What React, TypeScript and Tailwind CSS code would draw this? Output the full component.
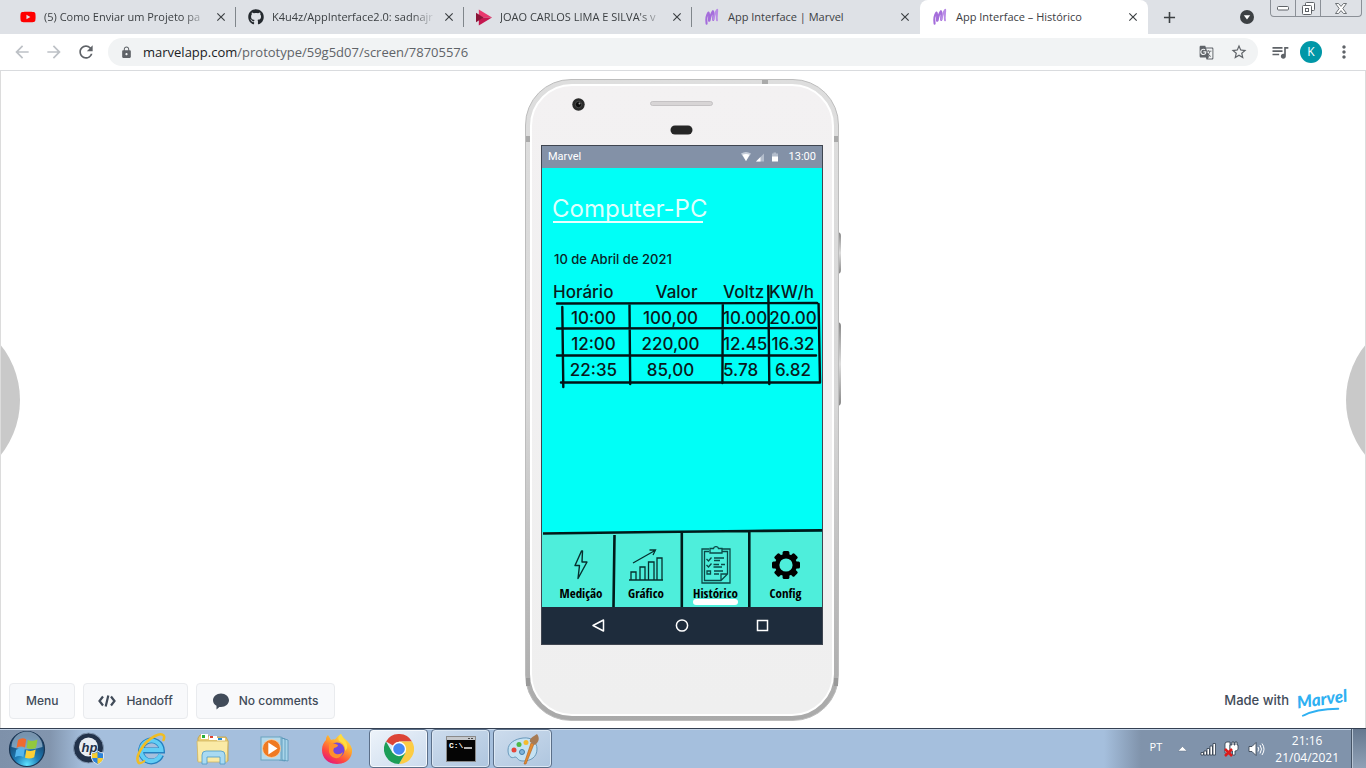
import type { ReactNode } from "react";
import { FaGithub, FaYoutube } from "react-icons/fa";
import {
  MdArrowBack,
  MdArrowForward,
  MdClose,
  MdGTranslate,
  MdLock,
  MdMoreVert,
  MdQueueMusic,
  MdRefresh,
  MdStarBorder,
  MdAdd,
} from "react-icons/md";

function MarvelMark() {
  return (
    <svg width="16" height="18" viewBox="0 0 16 18" fill="none" stroke="#a56ddb" strokeLinecap="round" strokeLinejoin="round" aria-hidden="true">
      <path d="M2.6 15.6C2 12 2.4 7.4 4.4 4.6C5.6 5 5 9.4 5 12.8" strokeWidth="2.1" />
      <path d="M5.6 12.4C6.2 9 7.2 5.4 9 3.2C10 4 9 9 9.2 12" strokeWidth="2.1" />
      <path d="M9.6 11.2C10.2 8 11.4 4 13.2 1.8C13.4 5 12.2 9 13 12.4" strokeWidth="1.9" stroke="#b98be6" />
    </svg>
  );
}

function PlayMark() {
  return (
    <svg width="17" height="17" viewBox="0 0 17 17" aria-hidden="true">
      <path d="M3 0L17 8.5H7L3 6Z" fill="#e8386d" />
      <path d="M17 8.5L3 17V11L7 8.5Z" fill="#c4174f" />
      <path d="M0 3.5L8 8.5L0 13.5Z" fill="#8a1538" />
    </svg>
  );
}

const tabs: { title: string; icon: ReactNode; active?: boolean; fade?: boolean }[] = [
  { title: "(5) Como Enviar um Projeto pa", icon: <FaYoutube size={16} color="#ff0000" />, fade: true },
  { title: "K4u4z/AppInterface2.0: sadnajr", icon: <FaGithub size={16} color="#24292e" />, fade: true },
  { title: "JOAO CARLOS LIMA E SILVA's v", icon: <PlayMark />, fade: true },
  { title: "App Interface | Marvel", icon: <MarvelMark /> },
  { title: "App Interface – Histórico", icon: <MarvelMark />, active: true },
];

function TabStrip() {
  return (
    <header className="flex h-[34px] bg-[#dee1e6] pl-2 text-[#3c4043]">
      {tabs.map((t, i) => (
        <div
          key={t.title}
          className={
            t.active
              ? "flex w-[228px] min-w-0 items-center rounded-t-lg bg-white pr-2 pl-3"
              : "flex w-[228px] min-w-0 items-center pl-3"
          }
        >
          <span className="flex w-4 shrink-0 justify-center">{t.icon}</span>
          <a
            href="#tab"
            className={
              t.fade
                ? "ml-2 w-[164px] text-[11px] leading-4 whitespace-nowrap [mask-image:linear-gradient(to_right,#000_85%,transparent)]"
                : "ml-2 w-[164px] text-[11px] leading-4 whitespace-nowrap"
            }
          >
            {t.title}
          </a>
          <button aria-label="Fechar guia" className="ml-1.5 flex shrink-0">
            <MdClose size={14} />
          </button>
          {i < 3 && <span className="ml-auto h-5 w-px shrink-0 bg-[#80868b]" />}
        </div>
      ))}
      <button aria-label="Nova guia" className="ml-3 flex items-center">
        <MdAdd size={19} />
      </button>
      <div className="ml-auto flex items-start">
        <button aria-label="Pesquisar guias" className="mt-2.5 mr-4 block">
          <svg width="14" height="14" viewBox="0 0 14 14">
            <circle cx="7" cy="7" r="7" fill="#3c4043" />
            <path d="M3.8 5.2H10.2L7 9.4Z" fill="#fff" />
          </svg>
        </button>
        <div className="mr-1 flex h-[17px] rounded-b border border-t-0 border-[#8b9097] text-[#5f6368]">
          <button aria-label="Minimizar" className="flex w-[25px] items-center justify-center border-r border-[#8b9097]">
            <svg width="13" height="6" viewBox="0 0 13 6">
              <rect x="0.5" y="1.5" width="11" height="3.5" rx="1" fill="#fff" stroke="currentColor" />
            </svg>
          </button>
          <button aria-label="Restaurar" className="flex w-[25px] items-center justify-center border-r border-[#8b9097]">
            <svg width="13" height="13" viewBox="0 0 13 13" fill="#fff" stroke="currentColor">
              <rect x="3.5" y="0.5" width="9" height="8" rx="1" />
              <rect x="0.5" y="3.5" width="9" height="9" rx="1" />
              <rect x="3.5" y="6.5" width="3" height="3" />
            </svg>
          </button>
          <button aria-label="Fechar" className="flex w-10 items-center justify-center">
            <svg width="12" height="11" viewBox="0 0 12 11">
              <path d="M0.5 0.5H3.5L6 3.4L8.5 0.5H11.5L7.8 5.5L11.5 10.5H8.5L6 7.6L3.5 10.5H0.5L4.2 5.5Z" fill="#fff" stroke="currentColor" strokeWidth="0.9" />
            </svg>
          </button>
        </div>
      </div>
    </header>
  );
}

function Toolbar() {
  return (
    <div className="flex h-[37px] items-center border-b border-[#d9dbde] bg-white pl-3 text-[#5f6368]">
      <button aria-label="Voltar" className="text-[#bdc1c6]">
        <MdArrowBack size={20} />
      </button>
      <button aria-label="Avançar" className="ml-3 text-[#bdc1c6]">
        <MdArrowForward size={20} />
      </button>
      <button aria-label="Atualizar" className="ml-3">
        <MdRefresh size={20} />
      </button>
      <div className="ml-3 flex h-7 flex-1 items-center rounded-full bg-[#f1f3f4] pr-2.5 pl-3">
        <MdLock size={13} />
        <a href="#url" className="ml-2.5 flex-1 text-[13px] leading-5">
          <span className="text-[#202124]">marvelapp.com</span>/prototype/59g5d07/screen/78705576
        </a>
        <button aria-label="Traduzir">
          <MdGTranslate size={15} />
        </button>
        <button aria-label="Favorito" className="ml-4">
          <MdStarBorder size={18} />
        </button>
      </div>
      <button aria-label="Mídia" className="ml-3">
        <MdQueueMusic size={20} />
      </button>
      <button className="ml-2.5 size-[22px] rounded-full bg-[#0097a7] text-xs leading-[22px] text-white">K</button>
      <button aria-label="Menu do navegador" className="mr-3 ml-3">
        <MdMoreVert size={20} />
      </button>
    </div>
  );
}

const readings = [
  ["10:00", "100,00", "10.00", "20.00"],
  ["12:00", "220,00", "12.45", "16.32"],
  ["22:35", "85,00", "5.78", "6.82"],
];

function HistoryTable() {
  return (
    <div className="relative mt-[11px]">
      <table className="ml-[11px] w-[268px] table-fixed border-collapse text-[17px] leading-6 font-medium whitespace-nowrap text-[#0a1a1c]">
        <colgroup>
          <col className="w-[77px]" />
          <col className="w-[93px]" />
          <col className="w-[46px]" />
          <col />
        </colgroup>
        <thead>
          <tr className="h-[26px] text-left align-top">
            <th className="p-0 font-medium">Horário</th>
            <th className="p-0 text-center font-medium">Valor</th>
            <th className="p-0 font-medium">Voltz</th>
            <th className="p-0 font-medium">KW/h</th>
          </tr>
        </thead>
        <tbody>
          {readings.map((r) => (
            <tr key={r[0]} className="h-[26px] align-top">
              <td className="p-0 pl-1 text-center">{r[0]}</td>
              <td className="p-0 pr-3 text-center">{r[1]}</td>
              <td className="p-0">{r[2]}</td>
              <td className="p-0 pr-1 text-center">{r[3]}</td>
            </tr>
          ))}
        </tbody>
      </table>
      <svg className="absolute top-0 left-0 h-[110px] w-full" stroke="#001417" strokeWidth="2.4" strokeLinecap="round" aria-hidden="true">
        <path d="M15 23.5L275 23M15 48.5L274 48M15 75.5L274 75.5M19 102.5H278M20.3 27L21.3 107M87.5 25L88.2 104M180.8 24L180.4 103M226.3 6L227.3 104M276.6 24L278 102" />
      </svg>
    </div>
  );
}

function BoltIcon() {
  return (
    <svg width="16" height="30" viewBox="0 0 16 30" fill="none" stroke="#06302f" strokeWidth="1.4" strokeLinejoin="round">
      <path d="M8.5 1L2 15.5H6.5L5 28.5L14 12H9L9.5 1Z" />
    </svg>
  );
}

function ChartIcon() {
  return (
    <svg width="36" height="34" viewBox="0 0 36 34" fill="none" stroke="#06302f" strokeWidth="1.3">
      <path d="M1 32H35M3 32V24H8V32M12 32V19H17V32M20.5 32V14H26V32M29 32V10H34V32M5 15L27 2.5M21.5 2L27.5 2L25 7" />
    </svg>
  );
}

function ClipboardIcon() {
  return (
    <svg width="32" height="38" viewBox="0 0 32 38" fill="none" stroke="#0b4a48" strokeWidth="1.3">
      <path d="M9 3H2V37H30V3H22M9 5.5H4.5V34.5H21L27.5 28V5.5H22M21 34.5V28H27.5" />
      <path d="M10 7V2.5H13.5C14 0 18 0 18.5 2.5H22V7Z" />
      <path d="M6.5 13L8.5 15L11.5 11.5M6.5 19L8.5 21L11.5 17.5M7 25H10.5V28H7ZM14 12H24M14 14.5H20M13.5 18.5H19M21 18.5H25M13.5 21H22M14 25H23M14 28H19" />
    </svg>
  );
}

function GearIcon() {
  return (
    <svg width="30" height="30" viewBox="0 0 30 30">
      <g fill="#000">
        {[0, 45, 90, 135].map((a) => (
          <rect key={a} x="11.6" y="1" width="6.8" height="28" rx="1.5" transform={`rotate(${a} 15 15)`} />
        ))}
        <circle cx="15" cy="15" r="11" />
      </g>
      <circle cx="15" cy="15" r="6.6" fill="#4eeedb" />
    </svg>
  );
}

const sections = [
  { label: "Medição", icon: <BoltIcon />, className: "pl-1.5" },
  { label: "Gráfico", icon: <ChartIcon />, className: "pr-1" },
  { label: "Histórico", icon: <ClipboardIcon />, className: "" },
  { label: "Config", icon: <GearIcon />, className: "" },
];

function SectionNav() {
  return (
    <nav className="relative grid h-[75px] grid-cols-[72px_68px_67px_1fr] bg-[#4eeedb]">
      {sections.map((s) => (
        <div key={s.label} className={s.className}>
          <a href="#secao" className="flex h-full flex-col items-center pt-3">
            <span className="flex h-[41px] items-center">{s.icon}</span>
            <span className="relative text-[13px] leading-4 font-bold whitespace-nowrap text-black [font-family:'Liberation_Sans_Narrow','Open_Sans_Condensed','DejaVu_Sans_Condensed',sans-serif]">
              {s.label === "Histórico" && <span className="absolute inset-x-0 top-3.5 h-1.5 rounded-full bg-white" />}
              <span className="relative">{s.label}</span>
            </span>
          </a>
        </div>
      ))}
      <svg className="pointer-events-none absolute -top-1 left-0 h-[79px] w-full" fill="none" stroke="#001a1a" strokeWidth="2.6" aria-hidden="true">
        <path d="M1 5.5L114 4L207 3L281 2.4M72.5 7L71.5 79M139.8 4V79M207.3 3V79" />
      </svg>
    </nav>
  );
}

function Phone() {
  return (
    <div className="relative">
      <span className="absolute top-[153px] -right-[2px] h-[42px] w-1 rounded-r bg-gradient-to-b from-[#888] via-[#ddd] to-[#888]" />
      <span className="absolute top-[243px] -right-[2px] h-[84px] w-1 rounded-r bg-gradient-to-b from-[#888] via-[#ddd] to-[#888]" />
      <div className="relative rounded-[46px] border border-[#bdbdbd] bg-gradient-to-b from-[#dedede] via-[#d8d8d8] to-[#a9a9a9] p-1">
        <span className="absolute top-0 left-[236px] h-1 w-1.5 bg-[#aaa]" />
        <span className="absolute top-14 left-0 h-1.5 w-1 bg-[#aaa]" />
        <span className="absolute top-14 right-0 h-1.5 w-1 bg-[#aaa]" />
        <span className="absolute bottom-[34px] left-0 h-2 w-1 bg-[#999]" />
        <span className="absolute right-0 bottom-[34px] h-2 w-1 bg-[#999]" />
        <div className="relative rounded-[42px] border-2 border-white bg-gradient-to-b from-[#f3f1f2] to-[#efefef] px-[9px] pb-[69px]">
          <svg className="h-[59px] w-full" viewBox="0 0 282 59" aria-hidden="true">
            <circle cx="37.5" cy="18.5" r="6.2" fill="#2a2a2a" />
            <circle cx="37.5" cy="18.5" r="3.2" fill="#0b0b0b" stroke="#555" strokeWidth="0.8" />
            <circle cx="38.5" cy="17.5" r="1" fill="#999" />
            <rect x="109.5" y="15.5" width="62" height="4" rx="2" fill="#d8d5d6" stroke="#bdbabb" strokeWidth="0.8" />
            <rect x="129.5" y="39.5" width="22" height="9" rx="4.5" fill="#262626" />
          </svg>
          <div className="flex w-[282px] flex-col border border-[#3f4550]">
            <div className="flex h-[22px] items-center bg-[#8391a7] pr-1.5 pl-1.5 text-[11px] font-normal text-white [font-family:Roboto,sans-serif]">
              Marvel
              <svg className="mr-2 ml-auto h-2.5 w-10" viewBox="0 0 40 10" aria-hidden="true">
                <path d="M0 1.5Q5 -1.5 10 1.5L5 9Z" fill="#c5cdd9" />
                <path d="M1.5 2.8Q5 1 8.5 2.8L5 9Z" fill="#fff" />
                <path d="M15 9.5L23 1.5V9.5Z" fill="#b3bdcc" />
                <path d="M15 9.5L19.5 5V9.5Z" fill="#fff" />
                <path d="M31 1.5H32.5V0.5H35V1.5H37V5H31Z" fill="#b3bdcc" />
                <path d="M31 4.5H37V9.5H31Z" fill="#fff" />
              </svg>
              13:00
            </div>
            <main className="min-h-[364px] flex-1 bg-[#00fff7] pt-[25px] [font-family:Inter,sans-serif]">
              <h1 className="relative pl-2.5 text-2xl leading-8 font-normal text-[#dffffd]">
                Computer-PC
                <span className="absolute bottom-0.5 left-[11px] h-0.5 w-[150px] bg-[#eafffe]" />
              </h1>
              <p className="mt-6 pl-3 text-[13px] leading-5 font-medium text-[#0a2426]">10 de Abril de 2021</p>
              <HistoryTable />
            </main>
            <SectionNav />
            <div className="flex h-[37px] items-center bg-[#1e2c3c] text-white">
              <svg className="w-full" height="16" viewBox="0 0 280 16" fill="none" stroke="currentColor" strokeWidth="1.5">
                <path d="M61.5 2V13L51 7.5Z" strokeLinejoin="round" />
                <circle cx="140" cy="7.5" r="5.6" />
                <rect x="215.5" y="2.5" width="10" height="10" />
              </svg>
            </div>
          </div>
        </div>
      </div>
    </div>
  );
}

function Canvas() {
  const button = "flex h-9 items-center rounded border border-[#e9ebee] bg-[#f8f9fb]";
  return (
    <section className="relative grid flex-1 grid-cols-[1fr_auto_1fr] overflow-hidden border-x border-[#dcdcdc] bg-white pt-2 pr-0.5 pb-[7px] text-xs font-medium text-[#414b59] [font-family:Inter,sans-serif]">
      <button aria-label="Tela anterior" className="absolute top-1/2 -left-[157px] size-44 -translate-y-1/2 rounded-full bg-[#c9c9c9]" />
      <button aria-label="Próxima tela" className="absolute top-1/2 -right-[157px] size-44 -translate-y-1/2 rounded-full bg-[#c9c9c9]" />
      <div className="relative flex items-end gap-2 pb-0.5 pl-2">
        <button className={button + " px-4"}>Menu</button>
        <button className={button + " gap-2.5 px-3.5"}>
          <svg width="18" height="12" viewBox="0 0 18 12" fill="none" stroke="currentColor" strokeWidth="2.2">
            <path d="M5 1.5L1.5 6L5 10.5M13 1.5L16.5 6L13 10.5M10.3 0.5L7.7 11.5" />
          </svg>
          Handoff
        </button>
        <button className={button + " gap-2.5 px-4"}>
          <svg width="16" height="17" viewBox="0 0 16 17" fill="currentColor">
            <path d="M8 0.5C12.5 0.5 16 3.5 16 7.3C16 11 12.5 14 8 14C7.4 14 6.9 14 6.4 13.9L3.5 16.5V12.8C1.3 11.6 0 9.6 0 7.3C0 3.5 3.5 0.5 8 0.5Z" />
          </svg>
          No comments
        </button>
      </div>
      <Phone />
      <div className="flex items-end justify-end pr-4 pb-0.5">
        <a href="#marvel" className="flex h-9 items-center gap-2 text-[13px]">
          Made with
          <span className="relative w-[50px] -rotate-8 pb-1 text-[17px] leading-5 font-black text-[#2eb0f2] italic [font-family:Lato,sans-serif]">
            Marvel
            <svg className="absolute -bottom-px left-0 h-1.5 w-11" viewBox="0 0 44 6" fill="none" stroke="currentColor" strokeWidth="2" strokeLinecap="round" aria-hidden="true">
              <path d="M4 5Q18 0 40 3" />
            </svg>
          </span>
        </a>
      </div>
    </section>
  );
}

function StartOrb() {
  return (
    <svg width="38" height="38" viewBox="0 0 38 38">
      <defs>
        <radialGradient id="orb" cx="50%" cy="95%" r="85%">
          <stop offset="0" stopColor="#5fe3ff" />
          <stop offset="0.4" stopColor="#1f7eb8" />
          <stop offset="1" stopColor="#15395f" />
        </radialGradient>
      </defs>
      <circle cx="19" cy="19" r="17.5" fill="url(#orb)" stroke="#1a3553" strokeWidth="1.2" />
      <path d="M3.5 17A15.5 15.5 0 0 1 34.5 17Q19 22 3.5 17Z" fill="#c9dfef" opacity="0.55" />
      <path d="M10 10Q14 7 18.2 9.3L17 17.5Q12.5 15.5 8.5 18Z" fill="#ef6b2f" />
      <path d="M19.8 10Q24.5 12 29.5 9.5L28 17.7Q23.5 20.3 18.6 18Z" fill="#92c83e" />
      <path d="M8.2 19.8Q12.5 17 16.8 19.2L15.4 27Q11 25 6.9 27.2Z" fill="#54b6ee" />
      <path d="M18.3 20Q23 22 27.7 19.6L26.2 27.3Q21.5 29.5 17 27.7Z" fill="#fccf36" />
    </svg>
  );
}

function HpIcon() {
  return (
    <svg width="32" height="34" viewBox="0 0 32 34">
      <circle cx="15.5" cy="16" r="15" fill="#22324a" stroke="#8095af" />
      <circle cx="15.5" cy="15" r="9.5" fill="#e8edf3" />
      <text x="8.5" y="19.5" fontSize="13" fontStyle="italic" fontWeight="bold" fill="#22324a" fontFamily="Liberation Sans, sans-serif">hp</text>
      <path d="M18.5 21Q22 21 24.5 19Q27 21 30.5 21V26Q30 30 24.5 32.5Q19 30 18.5 26Z" fill="#2c82d8" stroke="#dfe6ee" />
      <path d="M24.5 20V26H19V21.5Q22 21.5 24.5 20ZM24.5 26H30Q29.5 30 24.5 32Z" fill="#f7cc2e" />
    </svg>
  );
}

function IeIcon() {
  return (
    <svg width="32" height="32" viewBox="0 0 32 32" fill="none">
      <path d="M26.2 22A10.5 10.5 0 1 1 27 17.5H8" stroke="#2580c0" strokeWidth="5.8" />
      <path d="M25.8 21.6A10.3 10.3 0 1 1 26.5 17H8" stroke="#62cdf5" strokeWidth="4" />
      <path d="M4 30C-1 25 8 9 20 3C26 0 31 1 28.5 7" stroke="#f0bd25" strokeWidth="2.6" strokeLinecap="round" />
      <path d="M3.5 29.5C4 31 7 30 10 27.5" stroke="#f0bd25" strokeWidth="2" />
    </svg>
  );
}

function FolderIcon() {
  return (
    <svg width="34" height="32" viewBox="0 0 34 32">
      <path d="M2 5L4 2H12L13 4H30L32 8V28H2Z" fill="#e8cb73" stroke="#bf9f49" strokeWidth="0.8" />
      <rect x="5" y="1" width="7" height="5" fill="#fff" /><rect x="6" y="2" width="3" height="3" fill="#28ae3b" />
      <rect x="13" y="3" width="8" height="4" fill="#fff" /><rect x="14" y="3" width="3" height="2" fill="#dd4232" />
      <rect x="21" y="5" width="8" height="4" fill="#fff" /><rect x="22" y="5" width="4" height="2" fill="#288cd1" />
      <path d="M1 8H32L31 29H2Z" fill="#faeaa6" stroke="#d2b763" strokeWidth="0.8" />
      <path d="M6 31V22Q6 18 10 18H25Q29 18 29 22V31H24V24H11V31Z" fill="#a9daf2" stroke="#4c99c5" strokeWidth="0.8" />
    </svg>
  );
}

function MediaIcon() {
  return (
    <svg width="30" height="28" viewBox="0 0 30 28">
      <path d="M22 3L28 5V26L22 25ZM19 2L25 4V26L19 25Z" fill="#a9d5ea" stroke="#5796b8" strokeWidth="0.8" />
      <rect x="1" y="2" width="20" height="23" fill="#b5d9eb" stroke="#6ba3c0" />
      <circle cx="11.5" cy="13.5" r="9" fill="#ef7a22" stroke="#fbd0a5" strokeWidth="0.8" />
      <path d="M8.3 7.5L17.5 13.5L8.3 19.5Z" fill="#fff" />
    </svg>
  );
}

function FirefoxIcon() {
  return (
    <svg width="32" height="32" viewBox="0 0 32 32">
      <defs>
        <linearGradient id="fox" x1="0.85" y1="0" x2="0.25" y2="1">
          <stop offset="0" stopColor="#fff04a" />
          <stop offset="0.4" stopColor="#ffa52c" />
          <stop offset="0.72" stopColor="#ff4a3e" />
          <stop offset="1" stopColor="#e2157f" />
        </linearGradient>
      </defs>
      <path d="M5 7C5 4 6 3 7 2L10 7Q12 6 14 6.5Q16 3 20 1C21 5 29 8 31 16C32 25 25 31 16 31C7 31 1 25 1 17C1 12 3 9 5 7Z" fill="url(#fox)" />
      <circle cx="16" cy="17" r="7.5" fill="#7447db" />
      <path d="M8 11Q12 9 17 12Q17 14 13 15Q11 19 15 21Q19 22 22 19Q20 26 14 25Q7 23 8 15Z" fill="#ff902c" />
      <path d="M18 8Q25 11 24 18Q28 15 25 9Q22 5 20 1Q16 4 18 8Z" fill="#ffdc42" />
    </svg>
  );
}

function ChromeIcon() {
  return (
    <svg width="30" height="30" viewBox="0 0 30 30">
      <path d="M15 15L2 7.5A15 15 0 0 1 28 7.5H15Z" fill="#dc4437" />
      <path d="M28 7.5A15 15 0 0 1 15 30L21.5 18.8L15 7.5Z" fill="#fccc44" />
      <path d="M2 7.5A15 15 0 0 0 15 30L21.5 18.8H8.5Z" fill="#1c9e58" />
      <circle cx="15" cy="15" r="7.2" fill="#fff" />
      <circle cx="15" cy="15" r="5.8" fill="#4587f3" />
    </svg>
  );
}

function TerminalIcon() {
  return (
    <svg width="30" height="26" viewBox="0 0 30 26">
      <rect x="0.5" y="0.5" width="29" height="25" fill="#050505" stroke="#8a8a8a" />
      <rect x="1" y="1" width="28" height="3" fill="#c5c8cc" />
      <path d="M22 2.5H24M25 2.5H27" stroke="#444" />
      <text x="3" y="12" fontSize="8" fontWeight="bold" fill="#fff" fontFamily="Liberation Mono, monospace">C:\</text>
      <path d="M18 12H26" stroke="#fff" strokeWidth="1.4" />
    </svg>
  );
}

function PaintIcon() {
  return (
    <svg width="34" height="32" viewBox="0 0 34 32">
      <path d="M17 5C26 4 31 9 31 16C31 24 25 28 17 28C11 28 12 24 9 24C5 26 2 23 2 17C2 10 9 6 17 5Z" fill="#c5e2f3" stroke="#6999bb" />
      <circle cx="8" cy="17" r="2.5" fill="#e5463b" /><circle cx="13" cy="11.5" r="2.5" fill="#4db848" />
      <circle cx="20" cy="9.5" r="2.5" fill="#f4bb2d" /><circle cx="16" cy="19" r="2.5" fill="#7fb4d9" stroke="#437fa9" />
      <path d="M18 31L25 10L28 11L20 31Z" fill="#e58b30" stroke="#ac6020" strokeWidth="0.6" />
      <path d="M24 9C23 5 27 4 31 1C34 5 33 9 29 12Z" fill="#a77b54" />
    </svg>
  );
}

const pinned = [
  { name: "HP", icon: <HpIcon /> },
  { name: "Internet Explorer", icon: <IeIcon /> },
  { name: "Explorador de Arquivos", icon: <FolderIcon /> },
  { name: "Media Player", icon: <MediaIcon /> },
  { name: "Firefox", icon: <FirefoxIcon /> },
  { name: "Chrome", icon: <ChromeIcon />, open: true },
  { name: "Prompt", icon: <TerminalIcon />, open: true },
  { name: "Paint", icon: <PaintIcon />, open: true },
];

function Taskbar() {
  return (
    <footer className="flex h-10 border-t border-[#344052] bg-[linear-gradient(to_right,#7e91aa_0,#8295ae_50px,#a5bfdd_84px,#a5bfdd_calc(100%_-_262px),#8093ab_calc(100%_-_225px),#8093ab_100%)] text-white shadow-[inset_0_1px_0_#c5d5e8]">
      <button aria-label="Iniciar" className="flex w-[54px] items-center justify-center">
        <StartOrb />
      </button>
      <div className="ml-[5px] flex gap-[3px]">
        {pinned.map((p) => (
          <button
            key={p.name}
            aria-label={p.name}
            className={
              p.open
                ? p.name === "Chrome"
                  ? "flex w-[59px] items-center justify-center rounded border border-[#5b6f89] bg-gradient-to-br from-[#edf3fa] to-[#cbdbed] shadow-[inset_0_0_0_1px_#f5f9fd]"
                  : "flex w-[59px] items-center justify-center rounded border border-[#5b6f89] bg-gradient-to-br from-[#cddced] to-[#afc6df] shadow-[inset_0_0_0_1px_#dce8f4]"
                : "flex w-[59px] items-center justify-center"
            }
          >
            {p.icon}
          </button>
        ))}
      </div>
      <div className="ml-auto flex items-center text-xs leading-[17px]">
        <button className="mr-4 mb-1 text-[11px]">PT</button>
        <svg width="80" height="16" viewBox="6 0 80 16" className="overflow-visible" aria-hidden="true">
          <path d="M6 10H15L10.5 5.5Z" fill="#fff" stroke="#66768b" strokeWidth="0.5" />
          <g fill="#fff" stroke="#2f3b4a" strokeWidth="0.8">
            <path d="M29 11.5H31.5V14H29ZM32 10H34.5V14H32ZM35 7.5H37.5V14H35ZM38 5H40.5V14H38ZM41 2.5H43.5V14H41Z" />
            <path d="M53 3Q53 1 55 1H58V12H53Z" />
            <path d="M60 1V4H58V8Q58 10 60.5 10V14H63V10Q66 10 66 8V4H65V1H63V4H62V1Z" />
            <path d="M77 5.5H80L84 1.5V14.5L80 10.5H77Z" />
          </g>
          <path d="M53 8L60 15M60 8L53 15" stroke="#dc1b1b" strokeWidth="2.5" />
          <path d="M86 6Q87.5 8 86 10.5M88 4Q91 8 88 12.5M90 2.5Q94 8 90 14" fill="none" stroke="#fff" />
        </svg>
        <button className="mr-3 ml-[17px] text-center">
          21:16
          <br />
          21/04/2021
        </button>
        <button aria-label="Mostrar área de trabalho" className="h-full w-[15px] border-l border-[#465466] bg-gradient-to-b from-[#66788f] to-[#90a1b6] shadow-[inset_1px_0_0_#b9c6d5]" />
      </div>
    </footer>
  );
}

export default function App() {
  return (
    <div className="flex min-h-screen flex-col bg-white [font-family:'Open_Sans','Noto_Sans',sans-serif]">
      <TabStrip />
      <Toolbar />
      <Canvas />
      <Taskbar />
    </div>
  );
}
